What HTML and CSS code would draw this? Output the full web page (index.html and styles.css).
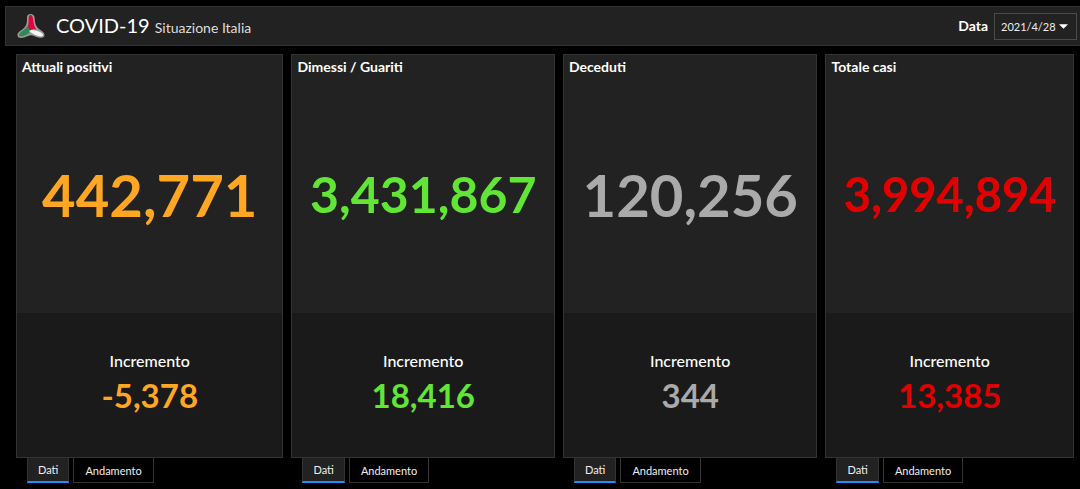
FILE: index.html
```html
<!DOCTYPE html>
<html lang="it">
<head>
    <meta charset="UTF-8">
    <meta name="viewport" content="width=device-width, initial-scale=1">
    <title>COVID-19 Situazione Italia</title>
    <link rel="stylesheet" href="styles.css">
</head>
<body>
    <header class="header">
        <svg class="logo" viewBox="0 0 28 26" aria-hidden="true">
            <path fill="#999" d="M10 4 C10 0 17 0 17.500 4 C18 10 18.500 13 22 16 C25 18 28 20 27.500 22.500 C27 26 21 25 17 23 Q14 21.500 11 23 C6 25.500 1 26 .500 22.500 C0 19 4 18 7 15 C10 12 10 9 10 4 Z"/>
            <path fill="#2e8b50" d="M11 12 C9 17 2 19 2 22 C2.500 25 12 22.500 14 17 Z"/>
            <path fill="#f4f4f4" d="M12 18 C15 15 26 19 26 22 C26 25 18 23 12 18 Z"/>
            <path fill="#e4003a" d="M11 13 C12.500 9 10.500 2 13.500 2 C17.500 2 15 12 19.500 16.500 Q15 15 13 17.500 Z"/>
        </svg>
        <h1 class="title">COVID-19 <small>Situazione Italia</small></h1>
        <label class="date-label" for="data">Data</label>
        <div class="date-select">
            <select id="data">
                <option>2021/4/28</option>
            </select>
            <svg class="arrow" viewBox="0 0 10 5" aria-hidden="true"><path fill="#fff" d="M0 0h10L5 5z"/></svg>
        </div>
    </header>

    <main class="cards">
        <section class="card positivi">
            <div class="panel">
                <h2>Attuali positivi</h2>
                <p class="number large">442,771</p>
                <div class="increment">
                    <h3>Incremento</h3>
                    <p class="increment-number">-5,378</p>
                </div>
            </div>
            <div class="tabs">
                <button type="button" class="tab active">Dati</button>
                <button type="button" class="tab">Andamento</button>
            </div>
        </section>

        <section class="card guariti">
            <div class="panel">
                <h2>Dimessi / Guariti</h2>
                <p class="number medium">3,431,867</p>
                <div class="increment">
                    <h3>Incremento</h3>
                    <p class="increment-number">18,416</p>
                </div>
            </div>
            <div class="tabs">
                <button type="button" class="tab active">Dati</button>
                <button type="button" class="tab">Andamento</button>
            </div>
        </section>

        <section class="card deceduti">
            <div class="panel">
                <h2>Deceduti</h2>
                <p class="number large">120,256</p>
                <div class="increment">
                    <h3>Incremento</h3>
                    <p class="increment-number">344</p>
                </div>
            </div>
            <div class="tabs">
                <button type="button" class="tab active">Dati</button>
                <button type="button" class="tab">Andamento</button>
            </div>
        </section>

        <section class="card totale">
            <div class="panel">
                <h2>Totale casi</h2>
                <p class="number small">3,994,894</p>
                <div class="increment">
                    <h3>Incremento</h3>
                    <p class="increment-number">13,385</p>
                </div>
            </div>
            <div class="tabs">
                <button type="button" class="tab active">Dati</button>
                <button type="button" class="tab">Andamento</button>
            </div>
        </section>
    </main>
</body>
</html>
```
FILE: styles.css
```css
* {
    box-sizing: border-box;
}
body {
    display: flex;
    flex-direction: column;
    min-height: 100vh;
    margin: 0;
    padding: 6px 0 6px 5px;
    background: #000;
    color: #fff;
    font-family: Lato, "Open Sans", sans-serif;
}
h1, h2, h3, p {
    margin: 0;
}
.header {
    display: flex;
    align-items: center;
    height: 40px;
    padding: 0 3px 0 11px;
    background: #222;
    border: 1px solid #333;
    border-right: 0;
}
.logo {
    width: 28px;
    height: 26px;
}
.title {
    flex: 1;
    margin-left: 11px;
    padding-bottom: 2px;
    font-size: 20px;
    font-weight: 400;
}
.title small {
    color: #ddd;
    font-size: 14px;
}
.date-label {
    margin-right: 6px;
    padding-bottom: 2px;
    font-size: 14px;
    font-weight: 700;
}
.date-select {
    position: relative;
}
.date-select select {
    appearance: none;
    display: block;
    width: 83px;
    height: 27px;
    padding: 0 18px 0 6px;
    background: #222;
    border: 1px solid #4a4a4a;
    border-radius: 0;
    color: #eee;
    font-family: inherit;
    font-size: 11px;
}
.arrow {
    position: absolute;
    top: 11px;
    right: 9px;
    width: 9px;
    height: 5px;
    pointer-events: none;
}
.cards {
    flex: 1;
    display: grid;
    grid-template-columns: 268fr 264fr 255fr 249fr;
    gap: 8px;
    padding: 8px 6px 0 11px;
}
.card {
    display: flex;
    flex-direction: column;
}
.panel {
    flex: 1;
    display: flex;
    flex-direction: column;
    background: #222;
    border: 1px solid #333;
}
.panel h2 {
    padding: 3px 5px;
    font-size: 14px;
    line-height: 18px;
}
.number {
    flex: 1;
    display: flex;
    align-items: center;
    justify-content: center;
    padding-bottom: 4px;
    font-weight: 700;
}
.large {
    font-size: 58px;
}
.medium {
    font-size: 50px;
}
.small {
    font-size: 47px;
}
.increment {
    display: flex;
    flex-direction: column;
    align-items: center;
    justify-content: center;
    height: 144px;
    padding-bottom: 4px;
    background: #1a1a1a;
}
.increment h3 {
    font-size: 16px;
    font-weight: 500;
    line-height: 24px;
}
.increment-number {
    font-size: 33px;
    font-weight: 700;
    line-height: 44px;
}
.positivi .number, .positivi .increment-number {
    color: #ffa623;
}
.guariti .number, .guariti .increment-number {
    color: #62e635;
}
.deceduti .number, .deceduti .increment-number {
    color: #aaa;
}
.totale .number, .totale .increment-number {
    color: #e00000;
}
.tabs {
    display: flex;
    gap: 4px;
    padding-left: 11px;
}
.tab {
    height: 25px;
    padding: 0 11px;
    background: #000;
    border: 1px solid #333;
    border-top: 0;
    color: #eee;
    font-family: inherit;
    font-size: 11px;
}
.tab.active {
    padding: 0 10px;
    background: #222;
    border-bottom: 2px solid #1e8fff;
}
```
